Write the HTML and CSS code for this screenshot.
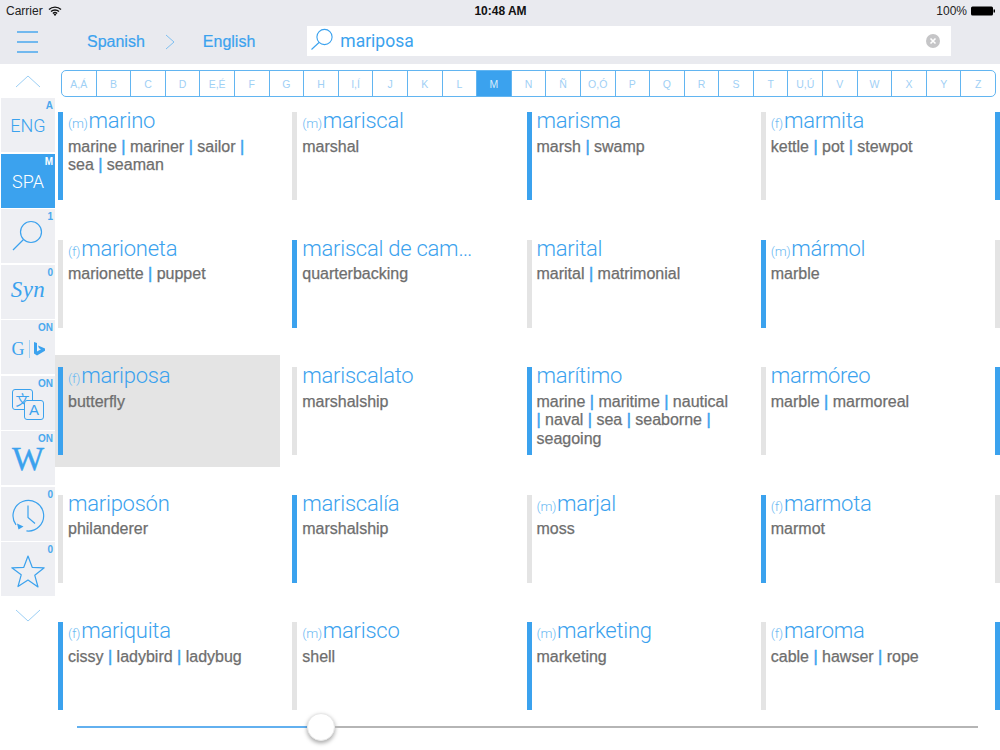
FILE: index.html
```html
<!DOCTYPE html>
<html lang="es">
<head>
<meta charset="utf-8">
<title>Dictionary</title>
<link rel="stylesheet" href="styles.css">
</head>
<body>
<div class="app">
  <header class="top">
    <div class="status">
      <div class="st-left">Carrier
        <svg class="wifi" width="14" height="10" viewBox="0 0 14 10"><path d="M1 3.600a8.500 8.500 0 0 1 12 0M3 5.600a5.700 5.700 0 0 1 8 0M4.900 7.500a3 3 0 0 1 4.200 0" fill="none" stroke="#111" stroke-width="1.4"/><path d="M7 10 5.600 8.400a2 2 0 0 1 2.800 0z" fill="#111"/></svg>
      </div>
      <div class="st-time">10:48 AM</div>
      <div class="st-right">100%
        <svg width="24" height="10" viewBox="0 0 24 10"><rect x="0" y="0.5" width="22" height="9" rx="1.500" fill="#000"/><rect x="22.500" y="3.500" width="1.500" height="3" fill="#000"/></svg>
      </div>
    </div>
    <nav class="nav">
      <svg class="burger" width="21" height="22" viewBox="0 0 21 22"><path d="M0 1h21M0 11h21M0 21h21" stroke="#4aa8ee" stroke-width="1.3"/></svg>
      <span class="lang lang-from">Spanish</span>
      <svg class="chev" width="10" height="16" viewBox="0 0 10 16"><path d="M1 1l8 7-8 7" fill="none" stroke="#7fc0f2" stroke-width="1"/></svg>
      <span class="lang lang-to">English</span>
      <div class="search">
        <svg width="24" height="24" viewBox="0 0 24 24"><circle cx="14.500" cy="9" r="7.600" fill="none" stroke="#3ba2ee" stroke-width="1.1"/><path d="M9 14.500 1.500 21.500" stroke="#3ba2ee" stroke-width="1.1"/></svg>
        <span class="query">mariposa</span>
        <svg class="clear" width="14" height="14" viewBox="0 0 14 14"><circle cx="7" cy="7" r="7" fill="#c5c5c7"/><path d="M4.500 4.500l5 5M9.500 4.500l-5 5" stroke="#fff" stroke-width="1.6"/></svg>
      </div>
    </nav>
  </header>

  <div class="alpha-row">
    <div class="up"><svg width="26" height="13" viewBox="0 0 26 13"><path d="M1 12 13 1l12 11" fill="none" stroke="#9ccff5" stroke-width="1"/></svg></div>
    <div class="alpha">
      <span>A,Á</span><span>B</span><span>C</span><span>D</span><span>E,É</span><span>F</span><span>G</span><span>H</span><span>I,Í</span><span>J</span><span>K</span><span>L</span><span class="on">M</span><span>N</span><span>Ñ</span><span>O,Ó</span><span>P</span><span>Q</span><span>R</span><span>S</span><span>T</span><span>U,Ú</span><span>V</span><span>W</span><span>X</span><span>Y</span><span>Z</span>
    </div>
  </div>

  <div class="main">
    <aside class="side">
      <div class="tab"><i class="badge">A</i><span class="tab-txt">ENG</span></div>
      <div class="tab active"><i class="badge">M</i><span class="tab-txt">SPA</span></div>
      <div class="tab"><i class="badge">1</i>
        <svg class="ic ic-search" width="36" height="36" viewBox="0 0 36 36"><circle cx="21" cy="14" r="10.500" fill="none" stroke="#3ba2ee" stroke-width="1.2"/><path d="M13.500 21.500 3 32" stroke="#3ba2ee" stroke-width="1.2"/></svg>
      </div>
      <div class="tab"><i class="badge">0</i><span class="syn">Syn</span></div>
      <div class="tab"><i class="badge">ON</i>
        <div class="gb"><span class="g">G</span><span class="gbar"></span>
          <svg width="11" height="14" viewBox="0 0 11 14"><path d="M0 0l3 1v8.500l4-2.300-2-1L4 3.400l7 3v2.400L3 13.500 0 11.500z" fill="#3ba2ee"/></svg>
        </div>
      </div>
      <div class="tab"><i class="badge">ON</i>
        <div class="trans">
          <span class="tr-a">文</span><span class="tr-b">A</span>
        </div>
      </div>
      <div class="tab"><i class="badge">ON</i><span class="wiki">W</span></div>
      <div class="tab"><i class="badge">0</i>
        <svg class="ic" width="34" height="34" viewBox="0 0 34 34"><path d="M6 27A15.300 15.300 0 1 1 17 32" fill="none" stroke="#3ba2ee" stroke-width="1.2" transform="rotate(6 17 17)"/><path d="M17 6.500v12l7 6" fill="none" stroke="#3ba2ee" stroke-width="1.2"/><path d="M6 24.500l6.500 3-5 3z" fill="#3ba2ee"/></svg>
      </div>
      <div class="tab"><i class="badge">0</i>
        <svg class="ic" width="34" height="34" viewBox="0 0 34 34"><path d="M17 2l4.200 11.300 12 .5-9.400 7.500 3.200 11.700L17 26l-10 6.500 3.200-11.700L.8 13.800l12-.5z" fill="none" stroke="#3ba2ee" stroke-width="1.2" stroke-linejoin="round"/></svg>
      </div>
      <div class="down"><svg width="26" height="13" viewBox="0 0 26 13"><path d="M1 1l12 11L25 1" fill="none" stroke="#9ccff5" stroke-width="1"/></svg></div>
    </aside>

    <section class="grid">
      <article class="cell b"><h2><em>(m)</em>marino</h2><p>marine <b>|</b> mariner <b>|</b> sailor <b>|</b> sea <b>|</b> seaman</p></article>
      <article class="cell"><h2><em>(m)</em>mariscal</h2><p>marshal</p></article>
      <article class="cell b"><h2>marisma</h2><p>marsh <b>|</b> swamp</p></article>
      <article class="cell"><h2><em>(f)</em>marmita</h2><p>kettle <b>|</b> pot <b>|</b> stewpot</p></article>
      <article class="cell b"></article>

      <article class="cell"><h2><em>(f)</em>marioneta</h2><p>marionette <b>|</b> puppet</p></article>
      <article class="cell b"><h2>mariscal de campo</h2><p>quarterbacking</p></article>
      <article class="cell"><h2>marital</h2><p>marital <b>|</b> matrimonial</p></article>
      <article class="cell b"><h2><em>(m)</em>mármol</h2><p>marble</p></article>
      <article class="cell"></article>

      <article class="cell b sel"><h2><em>(f)</em>mariposa</h2><p>butterfly</p></article>
      <article class="cell"><h2>mariscalato</h2><p>marshalship</p></article>
      <article class="cell b"><h2>marítimo</h2><p>marine <b>|</b> maritime <b>|</b> nautical <b>|</b> naval <b>|</b> sea <b>|</b> seaborne <b>|</b> seagoing</p></article>
      <article class="cell"><h2>marmóreo</h2><p>marble <b>|</b> marmoreal</p></article>
      <article class="cell b"></article>

      <article class="cell"><h2>mariposón</h2><p>philanderer</p></article>
      <article class="cell b"><h2>mariscalía</h2><p>marshalship</p></article>
      <article class="cell"><h2><em>(m)</em>marjal</h2><p>moss</p></article>
      <article class="cell b"><h2><em>(f)</em>marmota</h2><p>marmot</p></article>
      <article class="cell"></article>

      <article class="cell b"><h2><em>(f)</em>mariquita</h2><p>cissy <b>|</b> ladybird <b>|</b> ladybug</p></article>
      <article class="cell"><h2><em>(m)</em>marisco</h2><p>shell</p></article>
      <article class="cell b"><h2><em>(m)</em>marketing</h2><p>marketing</p></article>
      <article class="cell"><h2><em>(f)</em>maroma</h2><p>cable <b>|</b> hawser <b>|</b> rope</p></article>
      <article class="cell b"></article>
    </section>
  </div>

  <div class="slider">
    <span class="fill"></span><span class="thumb"></span><span class="rest"></span>
  </div>
</div>
</body>
</html>
```
FILE: styles.css
```css
* { box-sizing: border-box; }
html, body { margin: 0; padding: 0; }
body { width: 1000px; height: 750px; overflow: hidden; background: #fff; font-family: "Liberation Sans", Arial, sans-serif; }
.app { width: 1000px; height: 750px; display: flex; flex-direction: column; overflow: hidden; }

.top { background: #e9eaef; height: 64px; flex: none; }
.status { height: 20px; display: grid; grid-template-columns: 1fr auto 1fr; align-items: center; padding: 1px 5px 0 6px; font-size: 12px; color: #222; }
.st-left { display: flex; align-items: center; gap: 5px; }
.st-time { font-weight: 700; font-size: 12px; color: #111; }
.st-right { display: flex; align-items: center; justify-content: flex-end; gap: 4px; }

.nav { height: 44px; display: flex; align-items: center; padding: 0 49px 0 17px; }
.burger { flex: none; margin-right: 49px; }
.lang { font-size: 16px; font-weight: 400; color: #3ba2ee; -webkit-text-stroke: 0.2px #3ba2ee; }
.chev { flex: none; margin: 0 28px 0 20px; }
.lang-to { margin-right: 52px; }
.search { flex: 1; height: 30px; margin-top: -2px; background: #fff; display: flex; align-items: center; padding: 0 11px 0 3px; }
.search svg:first-child { margin-top: -2px; }
.query { flex: 1; margin-left: 6px; font-family: Roboto, sans-serif; font-size: 17.500px; color: #3ba2ee; }

.alpha-row { height: 34px; flex: none; display: flex; align-items: flex-start; }
.up { width: 55px; height: 24px; padding-top: 10px; display: flex; justify-content: center; }
.up svg { margin-top: 1px; }
.alpha { margin: 6px 0 0 6px; width: 935px; height: 27px; display: flex; border: 1px solid #62b5f1; border-radius: 5px; overflow: hidden; }
.alpha span { flex: 1; display: flex; align-items: center; justify-content: center; font-size: 10.500px; color: #9fd0f5; border-left: 1px solid #62b5f1; }
.alpha span:first-child { border-left: none; }
.alpha .on { background: #3ba2ee; color: #d8ecfb; }

.main { flex: 1; display: flex; min-height: 0; }
.side { width: 55px; flex: none; padding-left: 1px; display: flex; flex-direction: column; gap: 1.500px; }
.tab { position: relative; height: 54px; flex: none; background: #eeeff3; display: flex; align-items: center; justify-content: center; color: #3ba2ee; }
.tab.active { background: #3ba2ee; color: #fff; }
.badge { position: absolute; top: 2px; right: 2px; font-style: normal; font-size: 10px; font-weight: 700; line-height: 12px; color: #4aa8ee; }
.active .badge { color: #fff; }
.tab-txt { font-family: Roboto, sans-serif; font-weight: 300; font-size: 18px; margin-top: 1px; }
.ic { margin-top: 4px; }
.ic-search { margin-top: 0; }
.syn { font-family: "Liberation Serif", serif; font-style: italic; font-size: 23px; letter-spacing: 0.5px; margin-top: -3px; }
.gb { display: flex; align-items: center; gap: 4px; margin-top: 4px; }
.g { font-family: "Liberation Serif", serif; font-size: 18px; line-height: 18px; }
.gbar { width: 1px; height: 18px; background: #a5d2f5; }
.trans { position: relative; width: 32px; height: 34px; margin-top: 6px; }
.tr-a { position: absolute; left: 0; top: 0; width: 21px; height: 21px; border: 1px solid #3ba2ee; border-radius: 3px; font-family: "Noto Sans CJK SC", sans-serif; font-size: 14px; line-height: 18px; text-align: center; }
.tr-b { position: absolute; left: 12px; top: 11px; width: 20px; height: 20px; border: 1px solid #3ba2ee; border-radius: 3px; background: #eeeff3; font-size: 15px; line-height: 18px; text-align: center; }
.wiki { font-family: "Liberation Serif", serif; font-size: 34px; line-height: 24px; margin-top: 2px; -webkit-text-stroke: 0.4px #3ba2ee; }
.down { height: 24px; padding-top: 11px; display: flex; justify-content: center; }

.grid { flex: 1; min-width: 0; height: 624px; padding-top: 2px; display: grid; grid-template-columns: repeat(5, 225px); grid-auto-rows: 112px; column-gap: 9.250px; row-gap: 15.500px; overflow: hidden; }
.cell { padding: 6px 3px 12px 13px; position: relative; min-width: 0; }
.cell::before { content: ""; position: absolute; left: 3px; top: 12px; width: 5px; height: 88px; background: #e4e4e4; }
.cell.b::before { background: #3ba2ee; }
.cell.sel { background: #e4e4e4; }
.cell h2 { margin: 0; height: 30px; font-family: Roboto, sans-serif; font-weight: 300; font-size: 22px; letter-spacing: -0.25px; line-height: 30px; color: #3ba2ee; white-space: nowrap; overflow: hidden; text-overflow: ellipsis; max-width: 179px; }
.cell em { font-style: normal; font-size: 13.500px; letter-spacing: -0.4px; line-height: 1; color: #6dbaf2; margin-right: 1px; }
.cell p { margin: 1.500px 0 0; max-width: 197px; font-size: 16px; line-height: 18.700px; color: #6e6e6e; -webkit-text-stroke: 0.25px #6e6e6e; }
.cell p b { font-weight: 400; color: #3ba2ee; -webkit-text-stroke: 0.5px #3ba2ee; }

.slider { position: absolute; left: 77px; top: 713px; width: 901px; height: 28px; display: flex; align-items: center; }
.fill { width: 230px; height: 2px; background: #62b0ef; }
.thumb { flex: none; width: 28px; height: 28px; border-radius: 50%; background: #fff; box-shadow: 0 2px 4px rgba(0,0,0,.35); border: 1px solid #e8e8e8; }
.rest { flex: 1; height: 2px; background: #b5b5b5; }
```
